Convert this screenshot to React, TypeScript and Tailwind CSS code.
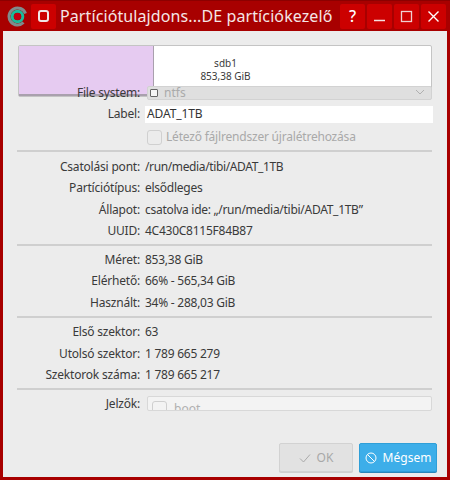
import React from "react";

const Sep = ({ mt }: { mt: string }) => <div className={`h-[2px] bg-[#cfcfcf] ml-[14px] mr-[15px] ${mt}`} />;

function Row({ label, value, vc = "tracking-[-0.25px]" }: { label: string; value: string; vc?: string }) {
  return (
    <div className="flex h-[21.5px] items-center">
      <div className="w-[137px] text-right text-[#3a3a3a] shrink-0 tracking-[-0.2px]">{label}</div>
      <div className={`ml-[5px] text-[#3a3a3a] whitespace-nowrap ${vc}`}>{value}</div>
    </div>
  );
}

const TitleBtn = ({ children }: { children: React.ReactNode }) => (
  <div className="w-[25px] h-[25px] bg-[#cc0000] rounded-[2px] flex items-center justify-center text-white">{children}</div>
);

export default function App() {
  return (
    <div
      className="w-[450px] h-[480px] bg-[#a80000] flex flex-col overflow-hidden text-[12px]"
      style={{ fontFamily: '"Noto Sans", sans-serif' }}
    >
      <div className="h-[31px] flex items-center shrink-0 pl-[7px] pr-[4px] border-t border-[#8c0000]">
        <svg width="21" height="21" viewBox="0 0 21 21" className="shrink-0">
          <path d="M16.5 16.5 A8.5 8.5 0 1 1 18.5 7.5" fill="none" stroke="#7f8c8d" strokeWidth="3" />
          <circle cx="10.5" cy="10.5" r="5.3" fill="none" stroke="#1abc9c" strokeWidth="3" />
          <circle cx="10.5" cy="10.5" r="3.6" fill="#c00010" />
        </svg>
        <div className="ml-[3px] w-[25px] h-[25px] bg-[#cc0000] rounded-[2px] flex items-center justify-center shrink-0">
          <div className="w-[11px] h-[12px] border-2 border-[#f0e6e6] rounded-[3px]" />
        </div>
        <div className="ml-[4px] text-[#f5e6e6] text-[16px] whitespace-nowrap tracking-[0.1px] flex-1 min-w-0">Partíciótulajdons...DE partíciókezelő</div>
        <div className="flex gap-[2px] shrink-0">
          <TitleBtn><span className="text-[16px] font-medium">?</span></TitleBtn>
          <TitleBtn>
            <svg width="13" height="13" viewBox="0 0 13 13"><path d="M1 10.5H12" stroke="#f4e0e0" strokeWidth="1.5" /></svg>
          </TitleBtn>
          <TitleBtn>
            <svg width="13" height="13" viewBox="0 0 13 13"><rect x="1.5" y="1.5" width="10" height="10" fill="none" stroke="#f0d0d0" strokeWidth="1.3" /></svg>
          </TitleBtn>
          <TitleBtn>
            <svg width="13" height="13" viewBox="0 0 13 13"><path d="M1.5 1.5L11.5 11.5M11.5 1.5L1.5 11.5" stroke="#fff" strokeWidth="1.4" /></svg>
          </TitleBtn>
        </div>
      </div>

      <div className="flex-1 bg-[#ececec] ml-[3px] mr-[3px] mb-[3px] flex flex-col">
        <div className="ml-[15px] mr-[15px] mt-[14px] h-[52px] flex border border-[#c4c4c4] rounded-[2px] bg-white shrink-0">
          <div className="w-[135px] bg-[#e6cbf1] border-r border-[#a9a0ad] border-b-[2px] border-b-[#a9a0ad]" />
          <div className="flex-1 flex flex-col items-center pt-[11px] leading-[13px] text-[10px] text-[#3a3a3a] pr-[134px]">
            <div>sdb1</div>
            <div className="whitespace-nowrap">853,38 GiB</div>
          </div>
        </div>

        <div className="flex h-[17px] items-center -mt-[13px]">
          <div className="w-[137px] text-right text-[#3a3a3a] shrink-0 tracking-[-0.2px]">File system:</div>
          <div className="ml-[7px] w-[285px] h-[14px] bg-[#dfdfdf] border border-[#d2d2d2] rounded-[2px] flex items-center pl-[2px] pr-[6px]">
            <div className="w-[8px] h-[8px] border border-[#666] rounded-[1px] bg-[#f5f5f5] shrink-0" />
            <div className="ml-[6px] text-[#aaaaaa] flex-1">ntfs</div>
            <svg width="10" height="7" viewBox="0 0 10 7"><path d="M1 1L5 5L9 1" fill="none" stroke="#b0b0b0" strokeWidth="1" /></svg>
          </div>
        </div>

        <div className="flex h-[18px] items-center mt-[4px]">
          <div className="w-[137px] text-right text-[#3a3a3a] shrink-0 tracking-[-0.2px]">Label:</div>
          <div className="ml-[5px] w-[288px] h-[17px] bg-white flex items-center pl-[2px] text-[#333] tracking-[-0.1px]">ADAT_1TB</div>
        </div>

        <div className="flex items-center h-[16px] mt-[6px] ml-[144px]">
          <div className="w-[15px] h-[15px] border border-[#d0d0d0] rounded-[3px] bg-[#ececec] shrink-0" />
          <div className="ml-[4px] text-[#a9a9a9] tracking-[-0.2px]">Létező fájlrendszer újralétrehozása</div>
        </div>

        <Sep mt="mt-[5px]" />
        <div className="mt-[4px]">
          <Row label="Csatolási pont:" value="/run/media/tibi/ADAT_1TB" vc="tracking-[-0.37px]" />
          <Row label="Partíciótípus:" value="elsődleges" />
          <Row label="Állapot:" value="csatolva ide: „/run/media/tibi/ADAT_1TB”" vc="tracking-[-0.28px]" />
          <Row label="UUID:" value="4C430C8115F84B87" />
        </div>
        <Sep mt="mt-[2px]" />
        <div className="mt-[3px]">
          <Row label="Méret:" value="853,38 GiB" />
          <Row label="Elérhető:" value="66% - 565,34 GiB" />
          <Row label="Használt:" value="34% - 288,03 GiB" />
        </div>
        <Sep mt="mt-[2px]" />
        <div className="mt-[4px]">
          <Row label="Első szektor:" value="63" />
          <Row label="Utolsó szektor:" value="1 789 665 279" />
          <Row label="Szektorok száma:" value="1 789 665 217" />
        </div>
        <Sep mt="mt-[2px]" />

        <div className="flex mt-[6px]">
          <div className="w-[137px] text-right text-[#3a3a3a] shrink-0 leading-[16px] tracking-[-0.2px]">Jelzők:</div>
          <div className="ml-[7px] w-[285px] h-[15px] bg-[#f3f3f3] border border-[#d8d8d8] rounded-[2px] overflow-hidden flex pl-[4px] pt-[4px]">
            <div className="w-[15px] h-[15px] border border-[#cfcfcf] rounded-[3px] shrink-0" />
            <div className="ml-[7px] text-[#b0b0b0] leading-[16px]">boot</div>
          </div>
        </div>

        <div className="flex justify-end gap-[6px] mt-auto mb-[5px] mr-[10px]">
          <div className="w-[74px] h-[29px] border border-[#d2d2d2] bg-[#e2e2e2] rounded-[2px] flex items-center justify-center gap-[6px] text-[#a8a8a8] shadow-[0_1px_0_#cfcfcf]">
            <svg width="12" height="12" viewBox="0 0 12 12"><path d="M1 6.5L4.5 10L11 2.5" fill="none" stroke="#aaa" strokeWidth="1" /></svg>
            <span>OK</span>
          </div>
          <div className="w-[78px] h-[29px] border border-[#2f9fd8] bg-[#3daee9] rounded-[2px] flex items-center justify-center gap-[6px] text-white shadow-[0_1px_0_#2a86b8]">
            <svg width="12" height="12" viewBox="0 0 12 12"><circle cx="6" cy="6" r="5" fill="none" stroke="#fff" strokeWidth="1" /><path d="M2.5 2.5L9.5 9.5" stroke="#fff" strokeWidth="1" /></svg>
            <span>Mégsem</span>
          </div>
        </div>
      </div>
    </div>
  );
}
